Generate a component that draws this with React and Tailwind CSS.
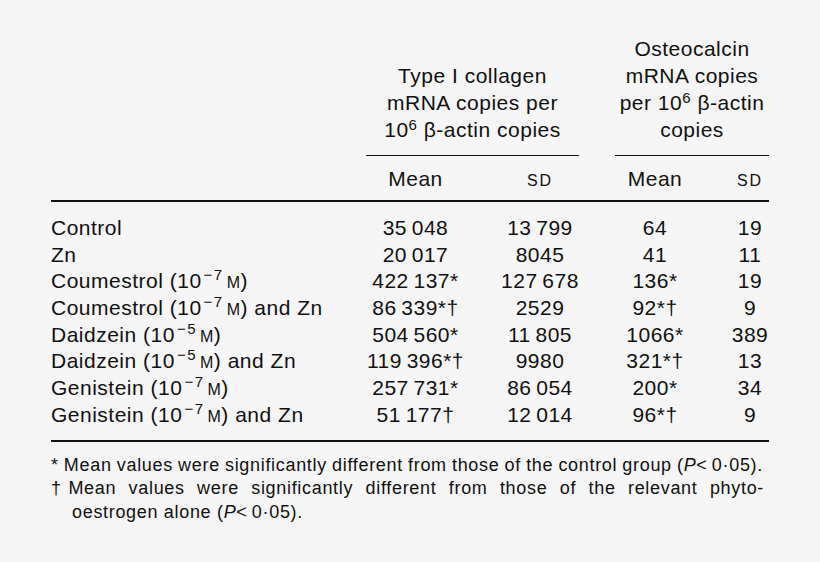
import React from "react";

function Conc({ exp }) {
  return (
    <>
      (10
      <span className="relative -top-[8px] ml-[2px] text-[15px] leading-none tracking-[1.5px]">
        −{exp}
      </span>
      <span className="ml-[3px] text-[16px] leading-none">M</span>)
    </>
  );
}

const T = "\u2009";

const rows = [
  { label: <>Control</>, m1: `35${T}048`, sd1: `13${T}799`, m2: "64", sd2: "19" },
  { label: <>Zn</>, m1: `20${T}017`, sd1: "8045", m2: "41", sd2: "11" },
  { label: <>Coumestrol <Conc exp="7" /></>, m1: `422${T}137*`, sd1: `127${T}678`, m2: "136*", sd2: "19" },
  { label: <>Coumestrol <Conc exp="7" /> and Zn</>, m1: `86${T}339*†`, sd1: "2529", m2: "92*†", sd2: "9" },
  { label: <>Daidzein <Conc exp="5" /></>, m1: `504${T}560*`, sd1: `11${T}805`, m2: "1066*", sd2: "389" },
  { label: <>Daidzein <Conc exp="5" /> and Zn</>, m1: `119${T}396*†`, sd1: "9980", m2: "321*†", sd2: "13" },
  { label: <>Genistein <Conc exp="7" /></>, m1: `257${T}731*`, sd1: `86${T}054`, m2: "200*", sd2: "34" },
  { label: <>Genistein <Conc exp="7" /> and Zn</>, m1: `51${T}177†`, sd1: `12${T}014`, m2: "96*†", sd2: "9" },
];

function SD() {
  return <span className="text-[16px] tracking-[2px]">SD</span>;
}

function Six() {
  return <span className="relative -top-[7px] text-[15px] leading-none">6</span>;
}

export default function App() {
  return (
    <div className="w-[820px] h-[562px] overflow-hidden bg-[#f5f5f5] text-[#111] font-['Liberation_Sans',Arial,sans-serif] pt-[35px] pl-[51px]">
      <div className="w-[718px] text-[21px] tracking-[0.5px]">
        {/* Header */}
        <div className="flex items-end">
          <div className="w-[315px]" />
          <div className="w-[213px] flex flex-col">
            <div className="text-center leading-[27px]">
              <div>Type I collagen</div>
              <div>mRNA copies per</div>
              <div>
                10<Six /> β-actin copies
              </div>
            </div>
            <div className="mt-[11.5px] h-[1.5px] bg-[#111]" />
            <div className="mt-[10px] flex leading-[26.67px]">
              <div className="w-[99px] text-center">Mean</div>
              <div className="ml-[36px] w-[78px] text-center">
                <SD />
              </div>
            </div>
          </div>
          <div className="ml-[36px] w-[154px] flex flex-col">
            <div className="text-center leading-[27px]">
              <div>Osteocalcin</div>
              <div>mRNA copies</div>
              <div>
                per 10<Six /> β-actin
              </div>
              <div>copies</div>
            </div>
            <div className="mt-[11.5px] h-[1.5px] bg-[#111]" />
            <div className="mt-[10px] flex leading-[26.67px]">
              <div className="w-[80px] text-center">Mean</div>
              <div className="ml-[36px] w-[38px] text-center">
                <SD />
              </div>
            </div>
          </div>
        </div>

        <div className="mt-[5.5px] h-[2px] bg-[#111]" />

        {/* Body */}
        <div className="mt-[12.8px] leading-[26.67px]">
          {rows.map((r, i) => (
            <div key={i} className="flex whitespace-nowrap">
              <div className="w-[315px]">{r.label}</div>
              <div className="w-[99px] text-center">{r.m1}</div>
              <div className="ml-[36px] w-[78px] text-center">{r.sd1}</div>
              <div className="ml-[36px] w-[80px] text-center">{r.m2}</div>
              <div className="ml-[36px] w-[38px] text-center">{r.sd2}</div>
            </div>
          ))}
        </div>

        <div className="mt-[12px] h-[2px] bg-[#111]" />
      </div>

      {/* Footnotes */}
      <div className="mt-[11.6px] w-[713px] text-[18px] leading-[23.5px] tracking-[0.68px] whitespace-nowrap">
        <div className="[word-spacing:-0.5px]">
          * Mean values were significantly different from those of the control group (<i>P</i>&lt;{T}0·05).
        </div>
        <div className="text-justify [text-align-last:justify] whitespace-normal">
          †Mean values were significantly different from those of the relevant phyto-
        </div>
        <div className="pl-[21px]">
          oestrogen alone (<i>P</i>&lt;{T}0·05).
        </div>
      </div>
    </div>
  );
}
